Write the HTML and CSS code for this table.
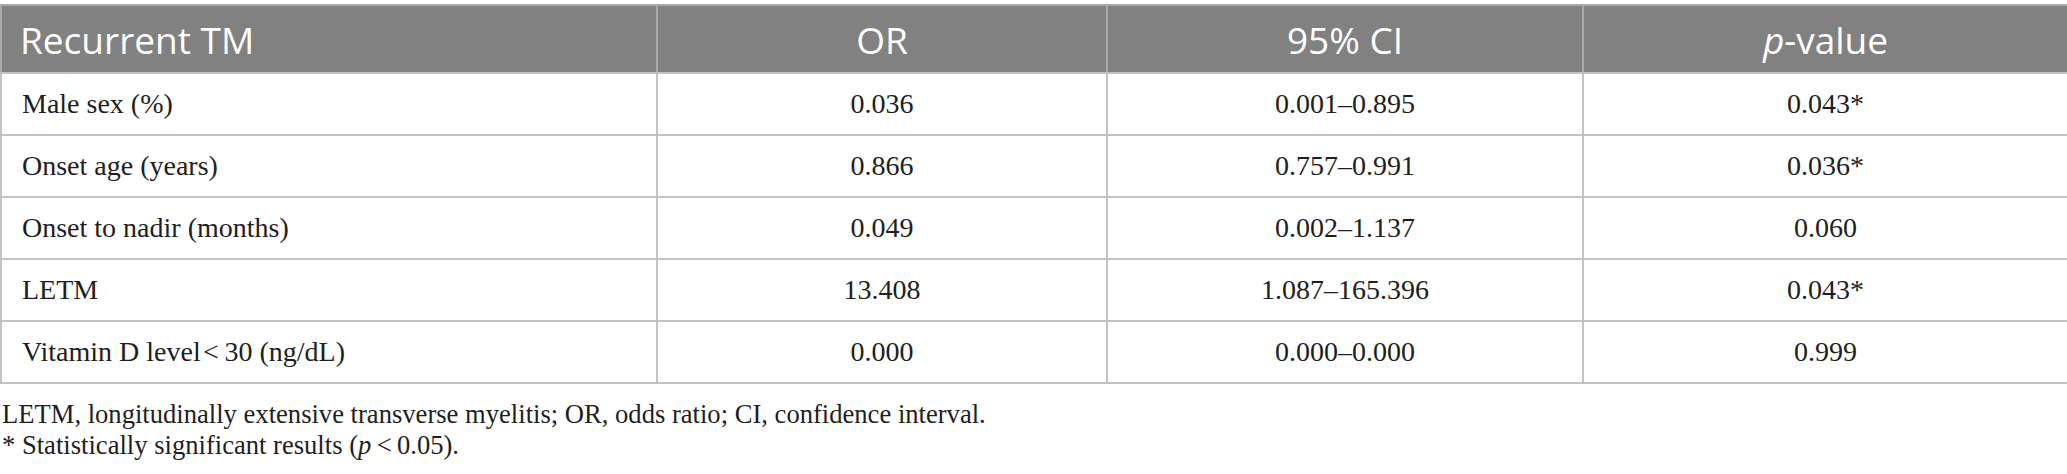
FILE: index.html
```html
<!DOCTYPE html>
<html lang="en">
<head>
<meta charset="utf-8">
<title>Recurrent TM</title>
<link rel="stylesheet" href="styles.css">
</head>
<body>
<div class="wrap">
  <table class="tbl">
    <colgroup>
      <col class="c1"><col class="c2"><col class="c3"><col class="c4">
    </colgroup>
    <thead>
      <tr>
        <th class="first">Recurrent TM</th>
        <th>OR</th>
        <th>95% CI</th>
        <th><i>p</i>-value</th>
      </tr>
    </thead>
    <tbody>
      <tr><td class="first">Male sex (%)</td><td>0.036</td><td>0.001–0.895</td><td>0.043*</td></tr>
      <tr><td class="first">Onset age (years)</td><td>0.866</td><td>0.757–0.991</td><td>0.036*</td></tr>
      <tr><td class="first">Onset to nadir (months)</td><td>0.049</td><td>0.002–1.137</td><td>0.060</td></tr>
      <tr><td class="first">LETM</td><td>13.408</td><td>1.087–165.396</td><td>0.043*</td></tr>
      <tr><td class="first">Vitamin D level&#8202;&lt;&#8201;30 (ng/dL)</td><td>0.000</td><td>0.000–0.000</td><td>0.999</td></tr>
    </tbody>
  </table>
  <div class="notes">
    <p>LETM, longitudinally extensive transverse myelitis; OR, odds ratio; CI, confidence interval.</p>
    <p>* Statistically significant results (<i>p</i>&#8201;&lt;&#8201;0.05).</p>
  </div>
</div>
</body>
</html>
```
FILE: styles.css
```css
html, body {
  margin: 0;
  padding: 0;
  background: #ffffff;
}
.wrap {
  padding-top: 4px;
}
.tbl {
  border-collapse: collapse;
  table-layout: fixed;
  width: 2067px;
}
.c1 { width: 656px; }
.c2 { width: 450px; }
.c3 { width: 476px; }
.c4 { width: 485px; }
.tbl th {
  height: 66px;
  padding: 0;
  background: #808180;
  color: #ffffff;
  font-family: "Open Sans", "Liberation Sans", sans-serif;
  font-weight: 400;
  font-size: 37px;
  text-align: center;
  vertical-align: middle;
  border: 2px solid #a9a9a9;
  border-bottom-color: #c2c2c2;
}
.tbl th i {
  font-style: italic;
}
.tbl td {
  height: 60px;
  padding: 0;
  font-family: "Liberation Serif", "Times New Roman", serif;
  font-size: 28px;
  color: #1e1e1e;
  text-align: center;
  vertical-align: middle;
  border: 2px solid #c2c2c2;
}
.tbl td.first {
  text-align: left;
  padding-left: 20px;
}
.tbl th.first {
  text-align: left;
  padding-left: 18px;
}
.notes {
  margin-top: 15px;
  font-family: "Liberation Serif", "Times New Roman", serif;
  font-size: 26.6px;
  color: #1e1e1e;
}
.notes p {
  margin: 0;
  line-height: 31px;
  padding-left: 2px;
}
```
